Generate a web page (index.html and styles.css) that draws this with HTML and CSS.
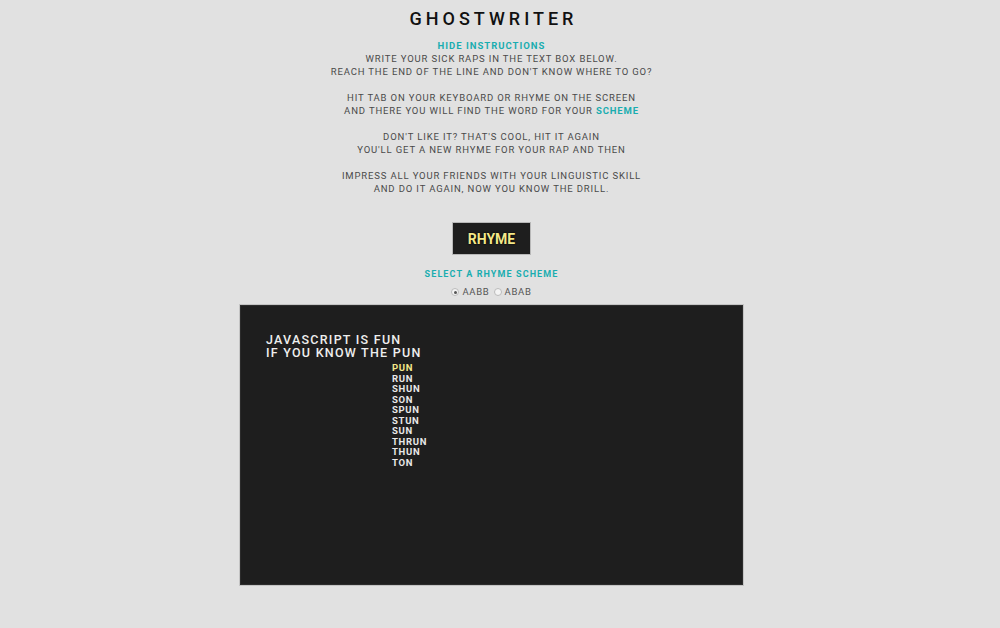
FILE: index.html
```html
<!DOCTYPE html>
<html>
<head>
<meta charset="utf-8">
<link rel="stylesheet" href="styles.css">
</head>
<body>
<div class="page">
  <h1 class="title">GHOSTWRITER</h1>
  <div class="toggle">HIDE INSTRUCTIONS</div>
  <div class="instructions">
    <p>WRITE YOUR SICK RAPS IN THE TEXT BOX BELOW.<br>REACH THE END OF THE LINE AND DON'T KNOW WHERE TO GO?</p>
    <p>HIT TAB ON YOUR KEYBOARD OR RHYME ON THE SCREEN<br>AND THERE YOU WILL FIND THE WORD FOR YOUR <span class="accent">SCHEME</span></p>
    <p>DON'T LIKE IT? THAT'S COOL, HIT IT AGAIN<br>YOU'LL GET A NEW RHYME FOR YOUR RAP AND THEN</p>
    <p>IMPRESS ALL YOUR FRIENDS WITH YOUR LINGUISTIC SKILL<br>AND DO IT AGAIN, NOW YOU KNOW THE DRILL.</p>
  </div>
  <button class="rhyme-btn">RHYME</button>
  <div class="scheme-label">SELECT A RHYME SCHEME</div>
  <div class="schemes">
    <label class="opt"><span class="radio checked"></span>AABB</label>
    <label class="opt"><span class="radio"></span>ABAB</label>
  </div>
  <div class="editor">
    <div class="lyrics">JAVASCRIPT IS FUN<br>IF YOU KNOW THE PUN</div>
    <ul class="suggestions">
      <li class="active">PUN</li>
      <li>RUN</li>
      <li>SHUN</li>
      <li>SON</li>
      <li>SPUN</li>
      <li>STUN</li>
      <li>SUN</li>
      <li>THRUN</li>
      <li>THUN</li>
      <li>TON</li>
    </ul>
  </div>
</div>
</body>
</html>
```
FILE: styles.css
```css
html, body {
  margin: 0;
  padding: 0;
  background: #e1e1e1;
}
body {
  font-family: Roboto, "Liberation Sans", sans-serif;
  color: #444;
}
.page {
  width: calc(100% - 17px);
  display: flex;
  flex-direction: column;
  align-items: center;
  padding-top: 8px;
}
.title {
  margin: 0;
  font-size: 18px;
  font-weight: 500;
  letter-spacing: 4px;
  line-height: 22px;
  color: #111;
  padding-left: 4px;
}
.toggle {
  margin-top: 10px;
  font-size: 9.5px;
  font-weight: 700;
  letter-spacing: 1px;
  color: #1aadb0;
  line-height: 12px;
}
.instructions {
  text-align: center;
  font-size: 9.5px;
  letter-spacing: 0.85px;
  line-height: 13px;
  color: #4a4a4a;
}
.instructions p {
  margin: 0 0 13px 0;
}
.accent {
  color: #1aadb0;
  font-weight: 700;
}
.rhyme-btn {
  margin-top: 14px;
  width: 79px;
  height: 33px;
  background: #1e1e1e;
  border: 1px solid #b8b8b8;
  color: #f3e88a;
  font-family: Roboto, "Liberation Sans", sans-serif;
  font-size: 14px;
  font-weight: 700;
  padding: 0;
  text-shadow: 0 0 2px #000, 0 0 1px #000;
  cursor: pointer;
}
.scheme-label {
  margin-top: 13px;
  font-size: 9px;
  font-weight: 700;
  letter-spacing: 1.1px;
  color: #1aadb0;
  line-height: 12px;
}
.schemes {
  margin-top: 6px;
  display: flex;
  gap: 4px;
  font-size: 9.5px;
  letter-spacing: 0.7px;
  color: #555;
  line-height: 12px;
}
.opt {
  display: flex;
  align-items: center;
  gap: 3px;
}
.radio {
  width: 6px;
  height: 6px;
  border-radius: 50%;
  border: 1px solid #bbb;
  background: #f4f4f4;
  display: inline-flex;
  align-items: center;
  justify-content: center;
}
.radio.checked::after {
  content: "";
  width: 3px;
  height: 3px;
  border-radius: 50%;
  background: #555;
}
.editor {
  margin-top: 6px;
  width: 503px;
  height: 280px;
  background: #1e1e1e;
  border: 1px solid #c4c4c4;
  box-shadow: inset 0 0 0 1px #2c2c2c;
  box-sizing: content-box;
}
.lyrics {
  margin: 28px 0 0 26px;
  font-size: 12.5px;
  font-weight: 500;
  letter-spacing: 1.25px;
  line-height: 13px;
  color: #eee;
}
.suggestions {
  list-style: none;
  margin: 4px 0 0 152px;
  padding: 0;
  font-size: 9.5px;
  font-weight: 700;
  letter-spacing: 0.7px;
  line-height: 10.5px;
  color: #e8e8e8;
}
.suggestions .active {
  color: #f3e88a;
}
```
